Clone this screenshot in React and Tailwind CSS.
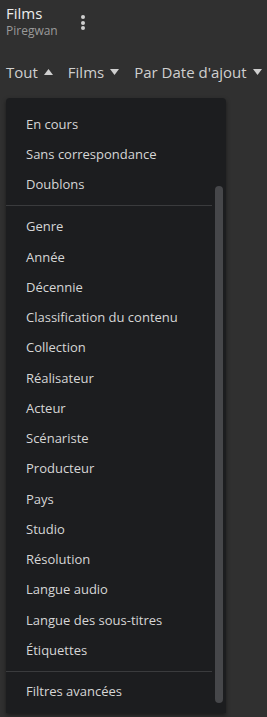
import React from "react";

const groupA = ["En cours", "Sans correspondance", "Doublons"];
const groupB = [
  "Genre",
  "Année",
  "Décennie",
  "Classification du contenu",
  "Collection",
  "Réalisateur",
  "Acteur",
  "Scénariste",
  "Producteur",
  "Pays",
  "Studio",
  "Résolution",
  "Langue audio",
  "Langue des sous-titres",
  "Étiquettes",
];

function Item({ children }) {
  return (
    <div className="h-[30.25px] flex items-center pl-[20px] text-[13px] text-[#d6d6d6] leading-none">
      {children}
    </div>
  );
}

function Up() {
  return (
    <svg width="9" height="6" viewBox="0 0 9 6" className="ml-[6px]">
      <path d="M0 6 L4.5 0 L9 6 Z" fill="#cfcfcf" />
    </svg>
  );
}
function Down() {
  return (
    <svg width="9" height="6" viewBox="0 0 9 6" className="ml-[6px]">
      <path d="M0 0 L4.5 6 L9 0 Z" fill="#cfcfcf" />
    </svg>
  );
}

export default function App() {
  return (
    <div
      className="w-[267px] h-[717px] bg-[#303030] overflow-hidden relative"
      style={{ fontFamily: '"Open Sans", "Noto Sans", sans-serif' }}
    >
      <div className="flex items-start pl-[6px] pt-[3px]">
        <div className="flex flex-col">
          <div className="text-[15px] font-medium text-[#ececec] leading-[20px]">Films</div>
          <div className="text-[12px] text-[#9a9a9a] leading-[15px]">Piregwan</div>
        </div>
        <div className="ml-[23px] mt-[12px] flex flex-col gap-[1.5px]">
          <div className="w-[4px] h-[4px] rounded-full bg-[#cfcfcf]" />
          <div className="w-[4px] h-[4px] rounded-full bg-[#cfcfcf]" />
          <div className="w-[4px] h-[4px] rounded-full bg-[#cfcfcf]" />
        </div>
      </div>

      <div className="flex items-center pl-[6px] mt-[25px] h-[18px] text-[15px] text-[#cfcfcf] leading-none">
        <span className="flex items-center">Tout<Up /></span>
        <span className="flex items-center ml-[15px]">Films<Down /></span>
        <span className="flex items-center ml-[15px]">Par Date d'ajout<Down /></span>
      </div>

      <div className="absolute left-[6px] top-[98px] w-[220px] h-[615px] bg-[#1c1d1f] rounded-t-[4px] shadow-[0_2px_4px_rgba(0,0,0,0.5)] overflow-hidden">
        <div className="pt-[11px]">
          {groupA.map((t) => (
            <Item key={t}>{t}</Item>
          ))}
        </div>
        <div className="mt-[5px] h-px w-[206px] bg-[#3a3b3d]" />
        <div className="pt-[6px]">
          {groupB.map((t) => (
            <Item key={t}>{t}</Item>
          ))}
        </div>
        <div className="mt-[5px] h-px w-[206px] bg-[#3a3b3d]" />
        <div className="pt-[5px]">
          <Item>Filtres avancées</Item>
        </div>
        <div className="absolute left-[209px] top-[88px] w-[8px] h-[517px] rounded-full bg-[#46474a]" />
      </div>
    </div>
  );
}
